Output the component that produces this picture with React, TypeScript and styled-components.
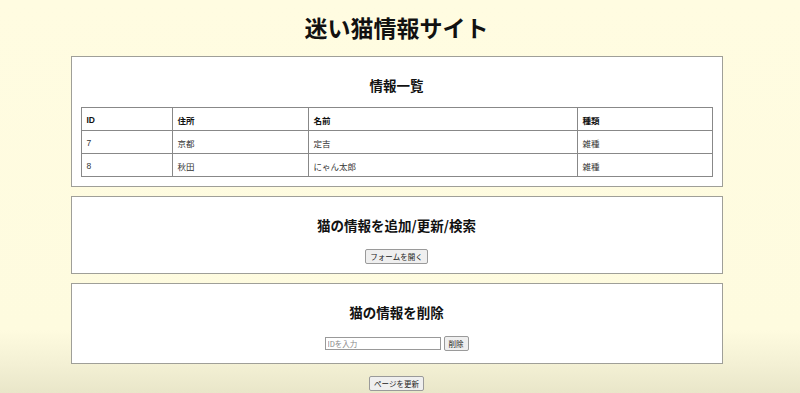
import React from "react";
import styled, { createGlobalStyle } from "styled-components";

const cats = [
  { id: 7, address: "京都", name: "定吉", kind: "雑種" },
  { id: 8, address: "秋田", name: "にゃん太郎", kind: "雑種" },
];

const GlobalStyle = createGlobalStyle`
  html, body {
    margin: 0;
    height: 100%;
  }
  body {
    font-family: "Liberation Sans", "Noto Sans CJK JP", sans-serif;
    color: #111;
    background: linear-gradient(
      to bottom,
      #fffce1 0px,
      #fefbdf 330px,
      #f3f0d4 365px,
      #e9e6c9 393px
    );
    background-repeat: no-repeat;
    background-color: #fffce1;
  }
`;

const App = () => {
  return (
    <Page>
      <GlobalStyle />
      <Title>迷い猫情報サイト</Title>
      <Card>
        <Heading>情報一覧</Heading>
        <Table>
          <colgroup>
            <col style={{ width: "91px" }} />
            <col style={{ width: "136px" }} />
            <col style={{ width: "269px" }} />
            <col />
          </colgroup>
          <thead>
            <tr>
              <Th>ID</Th>
              <Th>住所</Th>
              <Th>名前</Th>
              <Th>種類</Th>
            </tr>
          </thead>
          <tbody>
            {cats.map((c) => (
              <tr key={c.id}>
                <Td>{c.id}</Td>
                <Td>{c.address}</Td>
                <Td>{c.name}</Td>
                <Td>{c.kind}</Td>
              </tr>
            ))}
          </tbody>
        </Table>
      </Card>
      <Card>
        <Heading>猫の情報を追加/更新/検索</Heading>
        <Controls>
          <Button>フォームを開く</Button>
        </Controls>
      </Card>
      <Card $bottom={12}>
        <Heading>猫の情報を削除</Heading>
        <Controls>
          <Input placeholder="IDを入力" />
          <Button>削除</Button>
        </Controls>
      </Card>
      <Footer>
        <Button>ページを更新</Button>
      </Footer>
    </Page>
  );
};

export default App;

const Page = styled.div`
  width: 652px;
  margin: 0 auto;
  padding: 11px 7px 0 0;
  display: flex;
  flex-direction: column;
  gap: 9px;
`;

const Title = styled.h1`
  margin: 0 0 4px;
  font-size: 23px;
  line-height: 32px;
  font-weight: bold;
  text-align: center;
  font-family: "Noto Sans CJK JP", sans-serif;
`;

const Card = styled.section<{ $bottom?: number }>`
  background: #fff;
  border: 1px solid #9f9f98;
  padding: 18px 9px ${(p) => p.$bottom ?? 9}px;
  display: flex;
  flex-direction: column;
  align-items: center;
`;

const Heading = styled.h2`
  margin: 0 0 12px;
  font-size: 13.5px;
  line-height: 20px;
  font-weight: bold;
  font-family: "Noto Sans CJK JP", sans-serif;
`;

const Table = styled.table`
  width: 100%;
  border-collapse: collapse;
  border: 1px solid #777;
  font-size: 8.5px;
  table-layout: fixed;
`;

const Th = styled.th`
  border: 1px solid #888;
  height: 23px;
  box-sizing: border-box;
  padding: 1px 5px 0;
  text-align: left;
  font-weight: bold;
`;

const Td = styled.td`
  border: 1px solid #888;
  height: 23px;
  box-sizing: border-box;
  padding: 1px 5px 0;
  color: #333;
`;

const Controls = styled.div`
  margin-top: 2px;
  display: flex;
  align-items: center;
  gap: 3px;
  height: 15px;
`;

const Button = styled.button`
  font-family: "Noto Sans CJK JP", sans-serif;
  font-size: 7.5px;
  line-height: 10px;
  height: 15px;
  padding: 0 4px;
  background: #efefef;
  border: 1px solid #9a9a9a;
  border-radius: 2px;
  color: #222;
`;

const Input = styled.input`
  width: 116px;
  height: 13px;
  box-sizing: border-box;
  font-size: 7.5px;
  padding: 0 2px;
  border: 1px solid #999;
  font-family: "Noto Sans CJK JP", sans-serif;
  &::placeholder {
    color: #888;
  }
`;

const Footer = styled.div`
  margin-top: 3px;
  display: flex;
  justify-content: center;
`;
